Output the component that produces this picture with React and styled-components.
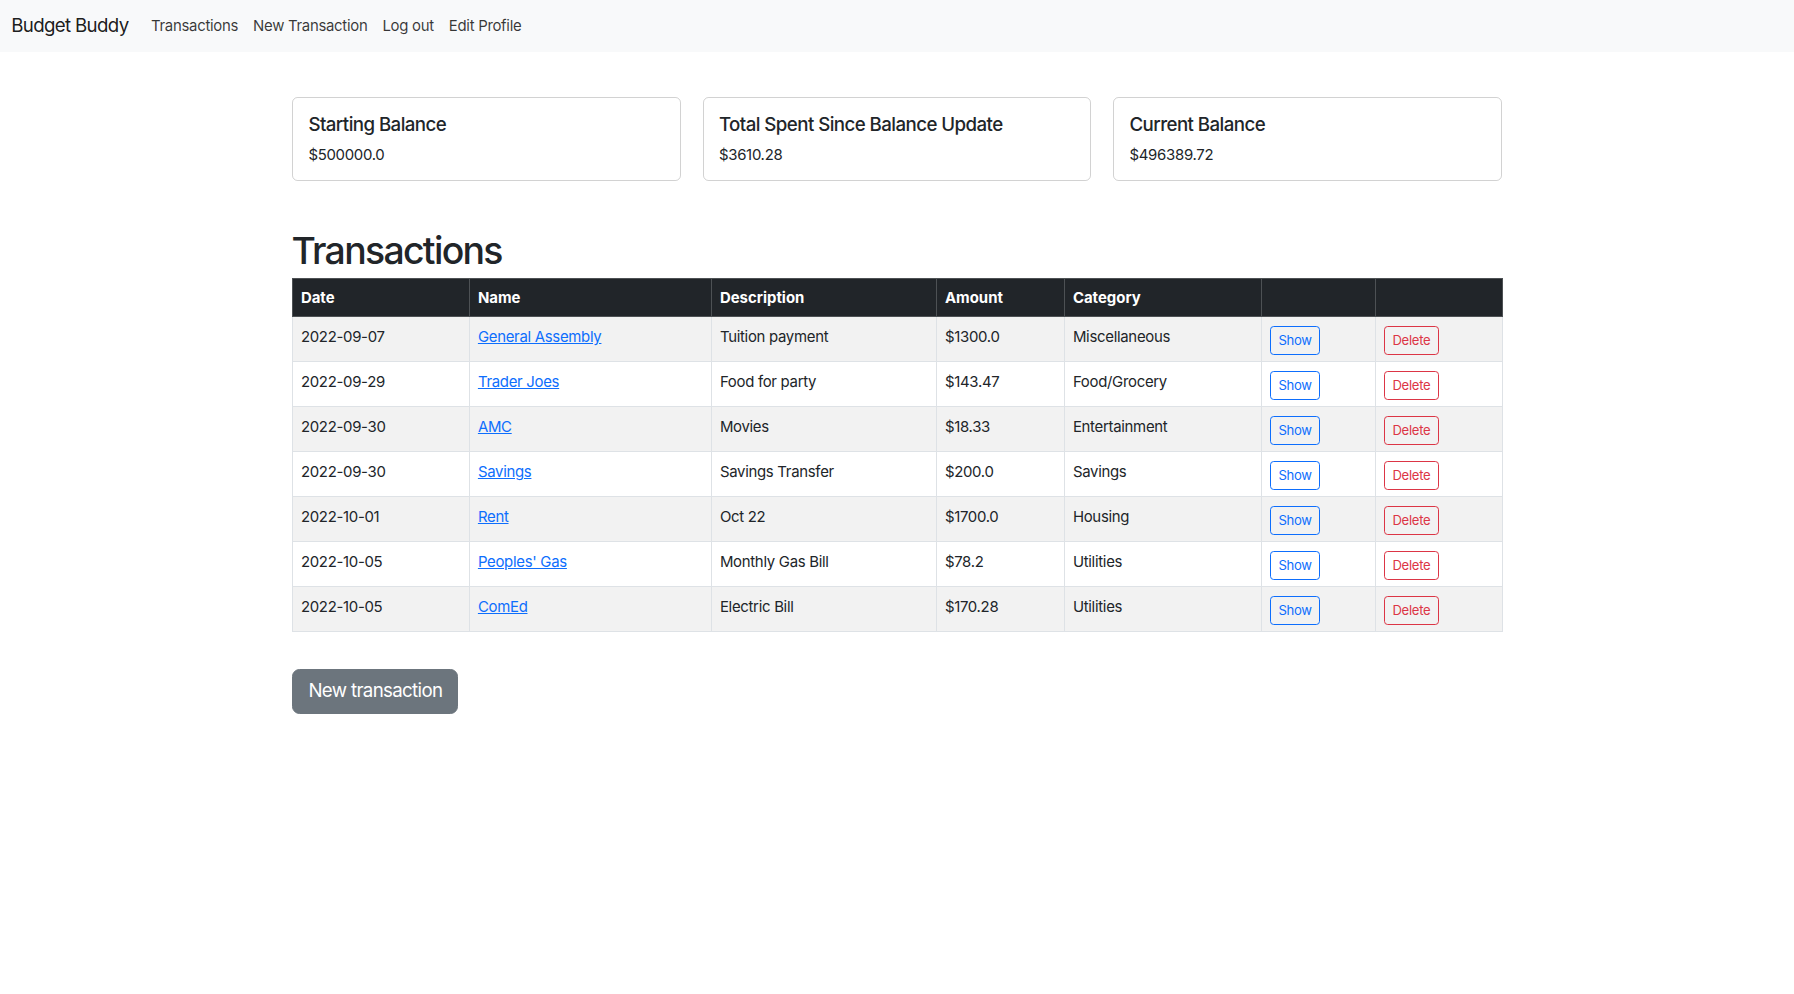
import styled, { createGlobalStyle } from "styled-components";

const GlobalStyle = createGlobalStyle`
  * { box-sizing: border-box; }
  body {
    margin: 0;
    font-family: Inter, "Liberation Sans", Arial, sans-serif;
    font-size: 14.94px;
    line-height: 1.5;
    letter-spacing: -0.02em;
    color: #212529;
    background: #fff;
  }
`;

const transactions = [
  { date: "2022-09-07", name: "General Assembly", description: "Tuition payment", amount: "$1300.0", category: "Miscellaneous" },
  { date: "2022-09-29", name: "Trader Joes", description: "Food for party", amount: "$143.47", category: "Food/Grocery" },
  { date: "2022-09-30", name: "AMC", description: "Movies", amount: "$18.33", category: "Entertainment" },
  { date: "2022-09-30", name: "Savings", description: "Savings Transfer", amount: "$200.0", category: "Savings" },
  { date: "2022-10-01", name: "Rent", description: "Oct 22", amount: "$1700.0", category: "Housing" },
  { date: "2022-10-05", name: "Peoples' Gas", description: "Monthly Gas Bill", amount: "$78.2", category: "Utilities" },
  { date: "2022-10-05", name: "ComEd", description: "Electric Bill", amount: "$170.28", category: "Utilities" },
];

const columns = [
  { label: "Date", width: 177 },
  { label: "Name", width: 242 },
  { label: "Description", width: 225 },
  { label: "Amount", width: 128 },
  { label: "Category", width: 197 },
  { label: "", width: 114 },
  { label: "", width: 127 },
];

const cards = [
  { title: "Starting Balance", value: "$500000.0" },
  { title: "Total Spent Since Balance Update", value: "$3610.28" },
  { title: "Current Balance", value: "$496389.72" },
];

export default function App() {
  return (
    <>
      <GlobalStyle />
      <Navbar>
        <Brand href="#">Budget Buddy</Brand>
        <NavLinks>
          <NavLink href="#">Transactions</NavLink>
          <NavLink href="#">New Transaction</NavLink>
          <NavLink href="#">Log out</NavLink>
          <NavLink href="#">Edit Profile</NavLink>
        </NavLinks>
      </Navbar>
      <Container>
        <CardRow>
          {cards.map((c) => (
            <Card key={c.title}>
              <CardTitle>{c.title}</CardTitle>
              <CardText>{c.value}</CardText>
            </Card>
          ))}
        </CardRow>
        <Heading>Transactions</Heading>
        <Table>
          <colgroup>
            {columns.map((c, i) => (
              <col key={i} style={{ width: c.width }} />
            ))}
          </colgroup>
          <thead>
            <tr>
              {columns.map((c, i) => (
                <Th key={i}>{c.label}</Th>
              ))}
            </tr>
          </thead>
          <tbody>
            {transactions.map((t, i) => (
              <Row key={i} $striped={i % 2 === 0}>
                <Td>{t.date}</Td>
                <Td><NameLink href="#">{t.name}</NameLink></Td>
                <Td>{t.description}</Td>
                <Td>{t.amount}</Td>
                <Td>{t.category}</Td>
                <Td><SmallButton $color="#0d6efd">Show</SmallButton></Td>
                <Td><SmallButton $color="#dc3545">Delete</SmallButton></Td>
              </Row>
            ))}
          </tbody>
        </Table>
        <NewButton>New transaction</NewButton>
      </Container>
    </>
  );
}

const Navbar = styled.nav`
  display: flex;
  align-items: center;
  height: 52px;
  padding: 1px 11.2px 0;
  background: #f8f9fa;
`;

const Brand = styled.a`
  font-size: 18.7px;
  line-height: 1.5;
  letter-spacing: -0.035em;
  padding: 4.7px 0;
  margin-right: 15px;
  color: rgba(0, 0, 0, 0.9);
  text-decoration: none;
`;

const NavLinks = styled.div`
  display: flex;
`;

const NavLink = styled.a`
  padding: 7.5px 7.5px;
  color: rgba(0, 0, 0, 0.78);
  text-decoration: none;
`;

const Container = styled.main`
  max-width: 1231.6px;
  margin: 0 auto;
  padding: 0 11.2px;
`;

const CardRow = styled.div`
  display: grid;
  grid-template-columns: repeat(3, 1fr);
  gap: 22.4px;
  margin-top: 44.8px;
`;

const Card = styled.div`
  border: 1px solid rgba(0, 0, 0, 0.175);
  border-radius: 5.6px;
  padding: 16px 15px 14px;
`;

const CardTitle = styled.h5`
  margin: 0 0 7.5px;
  font-size: 18.7px;
  font-weight: 500;
  line-height: 1.2;
  letter-spacing: -0.03em;
`;

const CardText = styled.p`
  margin: 0;
`;

const Heading = styled.h1`
  margin: 47.5px 0 4px -1px;
  font-size: 37.4px;
  font-weight: 500;
  line-height: 1.2;
  letter-spacing: -0.045em;
`;

const Table = styled.table`
  width: 100%;
  table-layout: fixed;
  border-collapse: collapse;
  margin-bottom: 15px;
`;

const Th = styled.th`
  text-align: left;
  padding: 8.5px 7.5px 6.5px;
  font-weight: 700;
  letter-spacing: 0;
  color: #fff;
  background: #212529;
  border: 1px solid #4d5154;
`;

const Row = styled.tr`
  background: ${(p) => (p.$striped ? "#f2f2f2" : "#fff")};
`;

const Td = styled.td`
  padding: 9px 7.5px 6px;
  vertical-align: top;
  border: 1px solid #dee2e6;
`;

const NameLink = styled.a`
  color: #0d6efd;
  text-decoration: underline;
`;

const SmallButton = styled.button`
  font-family: inherit;
  font-size: 13.08px;
  line-height: 1.5;
  letter-spacing: -0.02em;
  padding: 3.7px 7.5px;
  border: 1px solid ${(p) => p.$color};
  border-radius: 3.7px;
  color: ${(p) => p.$color};
  background: transparent;
  cursor: pointer;
`;

const NewButton = styled.button`
  margin-top: 22px;
  font-family: inherit;
  font-size: 18.7px;
  line-height: 1.5;
  letter-spacing: -0.035em;
  padding: 7.5px 15px;
  border: 1px solid #6c757d;
  border-radius: 7.5px;
  color: #fff;
  background: #6c757d;
  cursor: pointer;
`;
